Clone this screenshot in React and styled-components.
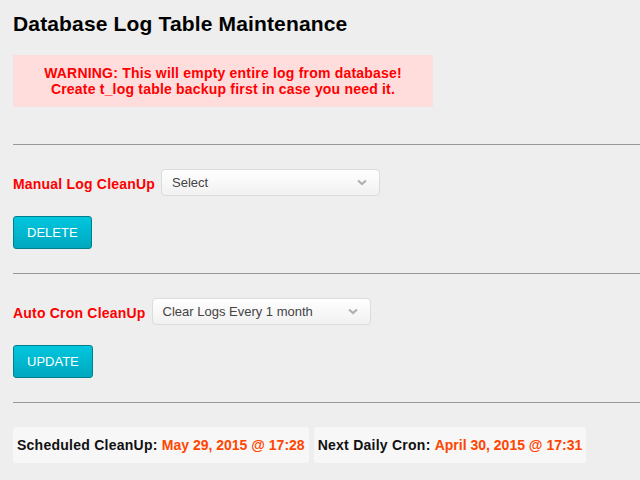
import React from "react";
import styled, { createGlobalStyle } from "styled-components";

const Global = createGlobalStyle`
  html, body { margin: 0; padding: 0; background: #eeeeee; }
  body { font-family: "Liberation Sans", Arial, sans-serif; overflow: hidden; }
`;

const Page = styled.div`
  padding: 12px 0 0 13px;
  width: 640px;
  box-sizing: border-box;
  overflow: hidden;
`;

const Title = styled.h2`
  margin: 0;
  font-size: 21px;
  letter-spacing: 0.15px;
  font-weight: bold;
  color: #000;
  line-height: 23px;
`;

const Warning = styled.div`
  margin-top: 20px;
  width: 420px;
  box-sizing: border-box;
  padding: 10px 0;
  background: #ffdddd;
  color: #ff0000;
  font-weight: bold;
  font-size: 14px;
  letter-spacing: 0.2px;
  line-height: 16px;
  text-align: center;
`;

const Rule = styled.hr`
  margin: ${(p) => p.$top}px 0 0 0;
  border: 0;
  border-top: 1px solid #999;
  height: 0;
`;

const Row = styled.div`
  display: flex;
  align-items: center;
  gap: 6px;
  margin-top: 24px;
`;

const Label = styled.label`
  color: #ff0000;
  font-weight: bold;
  font-size: 14px;
  letter-spacing: 0.2px;
  padding-top: 2px;
`;

const SelectBox = styled.div`
  width: 219px;
  height: 27px;
  box-sizing: border-box;
  border: 1px solid #dcdcdc;
  border-radius: 4px;
  background: linear-gradient(#ffffff, #f1f1f1);
  display: flex;
  align-items: center;
  justify-content: space-between;
  padding: 0 12px 0 10px;
  font-size: 13px;
  color: #444;
`;

const Button = styled.button`
  margin-top: 20px;
  height: 33px;
  padding: 0 13px;
  border: 1px solid #007f8c;
  border-radius: 3px;
  background: linear-gradient(#00c6de, #00a8bf);
  color: #fff;
  font-family: "Liberation Sans", Arial, sans-serif;
  font-size: 13px;
  display: block;
  cursor: pointer;
`;

const Info = styled.div`
  display: flex;
  gap: 5px;
  margin-top: 24px;
`;

const InfoBox = styled.div`
  background: #f7f7f7;
  border-radius: 3px;
  padding: 10px 4px;
  font-size: 14px;
  line-height: 16px;
  font-weight: bold;
  color: #111;
`;

const Key = styled.span`
  letter-spacing: 0.25px;
`;

const Value = styled.span`
  color: #ff4500;
`;

const Chevron = () => (
  <svg width="10" height="7" viewBox="0 0 10 7">
    <path d="M1 1.5 L5 5 L9 1.5" fill="none" stroke="#b0b0b0" strokeWidth="2.2" />
  </svg>
);

export default function App() {
  return (
    <>
      <Global />
      <Page>
        <Title>Database Log Table Maintenance</Title>
        <Warning>
          WARNING: This will empty entire log from database!
          <br />
          Create t_log table backup first in case you need it.
        </Warning>

        <Rule $top={37} />
        <Row>
          <Label>Manual Log CleanUp</Label>
          <SelectBox>
            <span>Select</span>
            <Chevron />
          </SelectBox>
        </Row>
        <Button>DELETE</Button>

        <Rule $top={24} />
        <Row>
          <Label>Auto Cron CleanUp</Label>
          <SelectBox>
            <span>Clear Logs Every 1 month</span>
            <Chevron />
          </SelectBox>
        </Row>
        <Button>UPDATE</Button>

        <Rule $top={24} />
        <Info>
          <InfoBox>
            <Key>Scheduled CleanUp: </Key>
            <Value>May 29, 2015 @ 17:28</Value>
          </InfoBox>
          <InfoBox>
            <Key>Next Daily Cron: </Key>
            <Value>April 30, 2015 @ 17:31</Value>
          </InfoBox>
        </Info>
      </Page>
    </>
  );
}
